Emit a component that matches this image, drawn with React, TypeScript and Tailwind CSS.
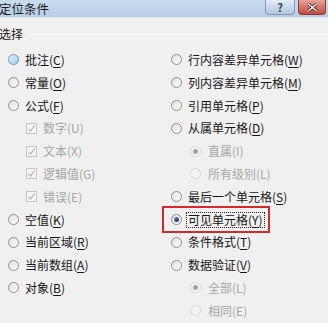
import React from "react"

type RadioProps = { checked?: boolean; disabled?: boolean; hover?: boolean }

function Radio({ checked, disabled, hover }: RadioProps) {
    const ring = disabled
        ? "border-[#d6d6d6] bg-[#f4f4f4]"
        : hover
          ? "border-[#5a9bd5] bg-gradient-to-br from-[#dcecfc] to-[#a9cdee]"
          : "border-[#8e8f8f] bg-gradient-to-br from-[#e2e2e2] to-[#fbfbfb]"
    return (
        <span className={`flex-shrink-0 w-[11px] h-[11px] rounded-full border flex items-center justify-center ${ring}`}>
            {checked ? (
                <span
                    className={`w-[5px] h-[5px] rounded-full ${disabled ? "bg-[#a3a3a3]" : "bg-gradient-to-br from-[#5d87b8] to-[#14325c]"}`}
                />
            ) : null}
        </span>
    )
}

function Check() {
    return (
        <span className="flex-shrink-0 w-[11px] h-[11px] border border-[#c5c5c5] bg-[#f6f6f6] flex items-center justify-center">
            <svg width="9" height="9" viewBox="0 0 9 9">
                <path d="M1.5 4.8 L3.6 7 L7.6 1.4" fill="none" stroke="#b4b4b4" strokeWidth="1.2" />
            </svg>
        </span>
    )
}

type Item = {
    kind: "radio" | "check"
    text: string
    key?: string
    indent?: boolean
    checked?: boolean
    disabled?: boolean
    hover?: boolean
    focus?: boolean
}

const left: Item[] = [
    { kind: "radio", text: "批注", key: "C", hover: true },
    { kind: "radio", text: "常量", key: "O" },
    { kind: "radio", text: "公式", key: "F" },
    { kind: "check", text: "数字", key: "U", indent: true, disabled: true },
    { kind: "check", text: "文本", key: "X", indent: true, disabled: true },
    { kind: "check", text: "逻辑值", key: "G", indent: true, disabled: true },
    { kind: "check", text: "错误", key: "E", indent: true, disabled: true },
    { kind: "radio", text: "空值", key: "K" },
    { kind: "radio", text: "当前区域", key: "R" },
    { kind: "radio", text: "当前数组", key: "A" },
    { kind: "radio", text: "对象", key: "B" },
]

const right: Item[] = [
    { kind: "radio", text: "行内容差异单元格", key: "W" },
    { kind: "radio", text: "列内容差异单元格", key: "M" },
    { kind: "radio", text: "引用单元格", key: "P" },
    { kind: "radio", text: "从属单元格", key: "D" },
    { kind: "radio", text: "直属", key: "I", indent: true, checked: true, disabled: true },
    { kind: "radio", text: "所有级别", key: "L", indent: true, disabled: true },
    { kind: "radio", text: "最后一个单元格", key: "S" },
    { kind: "radio", text: "可见单元格", key: "Y", checked: true, focus: true },
    { kind: "radio", text: "条件格式", key: "T" },
    { kind: "radio", text: "数据验证", key: "V" },
    { kind: "radio", text: "全部", key: "L", indent: true, checked: true, disabled: true },
    { kind: "radio", text: "相同", key: "E", indent: true, disabled: true },
]

function Row({ item, leftCol }: { item: Item; leftCol: boolean }) {
    const pad = item.indent ? (leftCol ? "pl-[18px] gap-[6px]" : "pl-[19px] gap-[7px]") : "gap-[6px]"
    return (
        <div className={`h-[22.8px] flex items-center ${pad}`}>
            {item.kind === "radio" ? (
                <Radio checked={item.checked} disabled={item.disabled} hover={item.hover} />
            ) : (
                <Check />
            )}
            <span
                className={`leading-none whitespace-nowrap ${item.disabled ? "text-[#a6a6a6]" : "text-[#161616]"} ${
                    item.focus ? "outline-1 outline-dotted outline-[#222] outline-offset-[1px]" : ""
                }`}
            >
                {item.text}(
                {item.disabled ? item.key : <span className="underline underline-offset-2">{item.key}</span>})
            </span>
        </div>
    )
}

export default function App() {
    return (
        <div
            className="relative w-[328px] h-[323px] overflow-hidden bg-[#f0f0f0] text-[12px]"
            style={{ fontFamily: '"Noto Sans CJK SC", "Noto Sans", sans-serif' }}
        >
            {/* title bar */}
            <div className="h-[18px] flex items-start bg-gradient-to-b from-[#c9dcef] to-[#b7cee6] border-b border-[#dfe8f1]">
                <span className="ml-[-1px] mt-[1px] text-[12.5px] leading-[15px] text-[#1b1b1b]">定位条件</span>
                <div className="ml-auto flex gap-[3px] pr-[2px]">
                    <span className="w-[30px] h-[15px] rounded-b-[4px] border border-t-0 border-[#7f97b3] bg-gradient-to-b from-[#e3edf7] to-[#b2c6dd] flex items-center justify-center text-[11px] leading-none font-bold text-[#2c3e57]">
                        ?
                    </span>
                    <span className="w-[28px] h-[15px] rounded-b-[4px] border border-t-0 border-[#8a3a33] bg-gradient-to-b from-[#e7a39a] to-[#c24a3c] flex items-center justify-center">
                        <svg width="11" height="9" viewBox="0 0 11 9">
                            <path d="M1.5 1 L9.5 8 M9.5 1 L1.5 8" stroke="#4a1510" strokeWidth="3" />
                            <path d="M1.5 1 L9.5 8 M9.5 1 L1.5 8" stroke="#ffffff" strokeWidth="1.6" />
                        </svg>
                    </span>
                </div>
            </div>

            {/* group header */}
            <div className="mt-[8px] h-[16px] flex items-center">
                <span className="ml-[-1px] leading-none text-[#161616]">选择</span>
                <span className="ml-[6px] flex-1 h-px bg-[#d5dde3] border-b border-white" />
            </div>

            <div className="mt-[6.6px] flex">
                <div className="w-[163px] pl-[8px]">
                    {left.map((it) => (
                        <Row key={it.text} item={it} leftCol />
                    ))}
                </div>
                <div className="flex-1 pl-[8px]">
                    {right.map((it) => (
                        <Row key={it.text} item={it} leftCol={false} />
                    ))}
                </div>
            </div>

            {/* red annotation box */}
            <div className="absolute left-[162px] top-[206px] w-[108px] h-[27px] border-2 border-[#d42a2a]" />
        </div>
    )
}
